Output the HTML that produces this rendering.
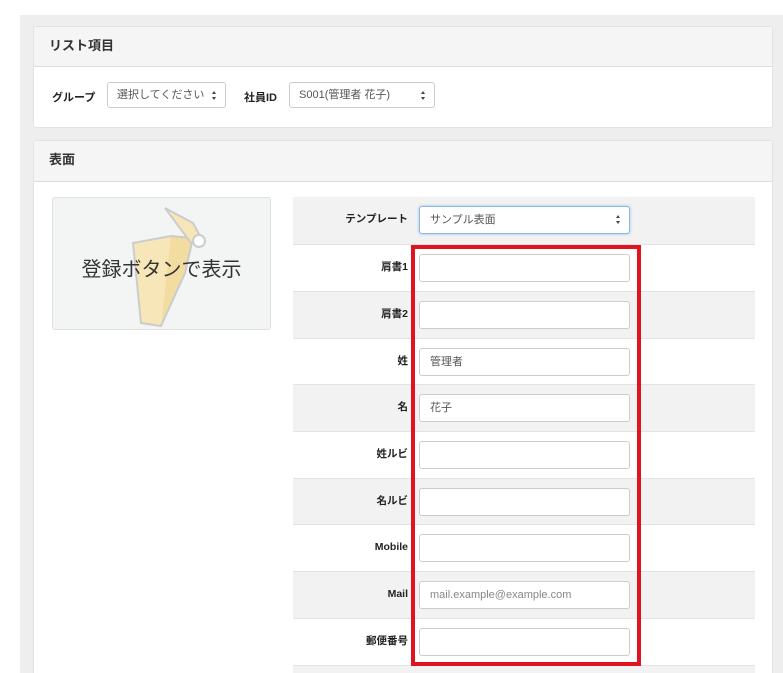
<!DOCTYPE html>
<html style="height:673px;overflow:hidden"><head><meta charset="utf-8"><style>
body{margin:0;width:783px;height:673px;overflow:hidden;background:#fff;font-family:"Liberation Sans","Noto Sans CJK JP",sans-serif;color:#333;position:relative}
.bg{position:absolute;left:20px;top:15px;width:763px;height:658px;background:#eeeeee}
.panel{position:absolute;left:33px;width:740px;background:#fff;border:1px solid #e2e2e2;border-radius:3px;box-sizing:border-box}
.ph{background:#f5f5f5;border-bottom:1px solid #ddd;height:39px;line-height:37px;padding-left:15px;font-size:13px;font-weight:bold}
.sel{position:absolute;height:26px;border:1px solid #ccc;border-radius:3px;box-sizing:border-box;font-size:11px;line-height:24px;padding-left:9px;color:#555;background:#fff}
.ar{position:absolute;right:8px;top:8px;width:5px;height:9px}
.ar:before{content:"";position:absolute;left:0;top:0;border:2.5px solid transparent;border-bottom:3px solid #444;border-top:0}
.ar:after{content:"";position:absolute;left:0;bottom:0;border:2.5px solid transparent;border-top:3px solid #444;border-bottom:0}
.lbl{position:absolute;font-size:11px;font-weight:bold;color:#222}
.row{position:absolute;left:293px;width:462px;height:47px;border-top:1px solid #e3e3e3;box-sizing:border-box}
.row.g{background:#f2f2f2}
.row .l{position:absolute;right:347px;top:0;line-height:45px;font-size:10.5px;font-weight:bold;color:#222}
.row .in{position:absolute;left:126px;top:9px;width:211px;height:28px;border:1px solid #ccc;border-radius:3px;box-sizing:border-box;background:#fff;font-size:11px;line-height:26px;padding-left:10px;color:#555}
</style></head><body>
<div class="bg"></div>
<div class="panel" style="top:26px;height:102px">
<div class="ph">リスト項目</div>
<div class="lbl" style="left:18px;top:62px">グループ</div>
<div class="sel" style="left:73px;top:55px;width:119px">選択してください<span class="ar"></span></div>
<div class="lbl" style="left:210px;top:62px">社員ID</div>
<div class="sel" style="left:255px;top:55px;width:146px">S001(管理者 花子)<span class="ar"></span></div>
</div>
<div class="panel" style="top:140px;height:560px">
<div class="ph" style="height:40px;line-height:38px">表面</div>
</div>
<div style="position:absolute;left:52px;top:197px;width:219px;height:133px;background:#f3f4f4;border:1px solid #e0e0e0;border-radius:3px;box-sizing:border-box;overflow:hidden">
<svg width="219" height="133" style="position:absolute;left:0;top:0">
<path d="M80 45 L118 38 L130 70 L108 128 L88 125 Z" fill="#f7e6b8" stroke="#ccc" stroke-width="2"/>
<path d="M118 38 L140 40 L132 75 L108 128" fill="#f3dca0" stroke="#ccc" stroke-width="2"/>
<path d="M112 10 L140 25 L148 40 L138 45 Z" fill="#f7e6b8" stroke="#ccc" stroke-width="2"/>
<circle cx="146" cy="43" r="6" fill="#fff" stroke="#ccc" stroke-width="2"/>
</svg>
<div style="position:absolute;left:0;right:0;top:55px;text-align:center;font-size:20px;color:#333">登録ボタンで表示</div>
</div>
<div class="row g" style="top:197px;border-top:none"><span class="l">テンプレート</span><div class="in" style="border-color:#8ab8e0;box-shadow:0 0 3px #9cc6ea">サンプル表面<span class="ar"></span></div></div>
<div class="row" style="top:244px"><span class="l">肩書1</span><div class="in"></div></div>
<div class="row g" style="top:291px"><span class="l">肩書2</span><div class="in"></div></div>
<div class="row" style="top:338px"><span class="l">姓</span><div class="in">管理者</div></div>
<div class="row g" style="top:384px"><span class="l">名</span><div class="in">花子</div></div>
<div class="row" style="top:431px"><span class="l">姓ルビ</span><div class="in"></div></div>
<div class="row g" style="top:478px"><span class="l">名ルビ</span><div class="in"></div></div>
<div class="row" style="top:524px"><span class="l">Mobile</span><div class="in"></div></div>
<div class="row g" style="top:571px"><span class="l">Mail</span><div class="in" style="color:#888">mail.example@example.com</div></div>
<div class="row" style="top:618px"><span class="l">郵便番号</span><div class="in"></div></div>
<div class="row g" style="top:665px;height:8px"></div>
<div style="position:absolute;left:411px;top:245px;width:230px;height:421px;border:4px solid #e0141e;box-sizing:border-box"></div>
</body></html>
